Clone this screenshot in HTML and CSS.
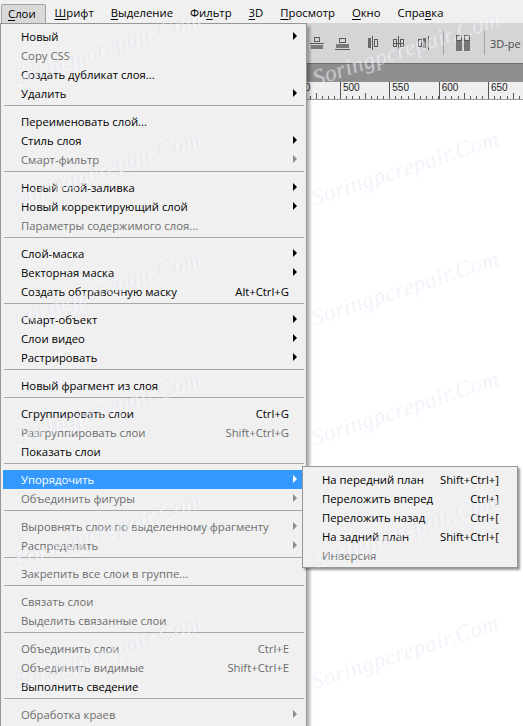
FILE: index.html
```html
<!DOCTYPE html>
<html lang="ru">
<head>
    <meta charset="UTF-8">
    <title>Слои</title>
    <link rel="stylesheet" href="styles.css">
</head>
<body>
<div class="app">
    <!-- main menu bar -->
    <div class="menubar">
        <span class="mb-item active"><u>С</u>лои</span>
        <span class="mb-item"><u>Ш</u>рифт</span>
        <span class="mb-item"><u>В</u>ыделение</span>
        <span class="mb-item">Фи<u>л</u>ьтр</span>
        <span class="mb-item"><u>3</u>D</span>
        <span class="mb-item"><u>П</u>росмотр</span>
        <span class="mb-item"><u>О</u>кно</span>
        <span class="mb-item">Спра<u>в</u>ка</span>
    </div>

    <!-- photoshop workspace behind the menu -->
    <div class="workspace">
        <div class="optionsbar">
            <svg class="ico i1" width="14" height="14" viewBox="0 0 14 14">
                <rect x="4.5" y="1.5" width="5" height="4" fill="none" stroke="#5a5a5a"/>
                <line x1="0" y1="7.5" x2="14" y2="7.5" stroke="#5a5a5a"/>
                <rect x="1" y="9" width="12" height="4" fill="#7a7a7a"/>
            </svg>
            <svg class="ico i2" width="15" height="14" viewBox="0 0 15 14">
                <rect x="4.5" y="2.5" width="6" height="4" fill="none" stroke="#5a5a5a"/>
                <rect x="1" y="8" width="13" height="4" fill="#7a7a7a"/>
                <line x1="0" y1="13.5" x2="15" y2="13.5" stroke="#5a5a5a"/>
            </svg>
            <svg class="ico i3" width="10" height="14" viewBox="0 0 10 14">
                <rect x="0" y="2" width="3" height="10" fill="#6a6a6a"/>
                <line x1="4.5" y1="0" x2="4.5" y2="14" stroke="#5a5a5a"/>
                <rect x="6.5" y="3.5" width="3" height="7" fill="none" stroke="#5a5a5a"/>
            </svg>
            <svg class="ico i4" width="11" height="14" viewBox="0 0 11 14">
                <rect x="0.5" y="3.5" width="3" height="7" fill="none" stroke="#5a5a5a"/>
                <line x1="5.5" y1="0" x2="5.5" y2="14" stroke="#5a5a5a"/>
                <rect x="7.5" y="3.5" width="3" height="7" fill="none" stroke="#5a5a5a"/>
                <line x1="0" y1="7.5" x2="11" y2="7.5" stroke="#5a5a5a"/>
            </svg>
            <svg class="ico i5" width="12" height="14" viewBox="0 0 12 14">
                <rect x="0.5" y="3.5" width="3" height="7" fill="none" stroke="#5a5a5a"/>
                <rect x="5" y="2" width="3" height="10" fill="#6a6a6a"/>
                <line x1="10.5" y1="0" x2="10.5" y2="14" stroke="#5a5a5a"/>
            </svg>
            <span class="vsep"></span>
            <svg class="ico i6" width="16" height="16" viewBox="0 0 16 16">
                <rect x="1.5" y="0.5" width="5" height="5" fill="none" stroke="#5a5a5a"/>
                <rect x="1" y="6" width="6" height="10" fill="#777"/>
                <rect x="9.5" y="0.5" width="5" height="5" fill="none" stroke="#5a5a5a"/>
                <rect x="9" y="6" width="6" height="10" fill="#777"/>
            </svg>
            <span class="vsep"></span>
            <span class="mode3d">3D-ре</span>
        </div>
        <div class="tabbar"></div>
        <div class="ruler">
            <span class="seg">450</span>
            <span class="seg">500</span>
            <span class="seg">550</span>
            <span class="seg">600</span>
            <span class="seg">650</span>
        </div>
        <div class="canvas"></div>
    </div>

    <!-- opened "Слои" menu -->
    <div class="menu">
        <div class="mi sub"><span>Новый</span><i class="arr"></i></div>
        <div class="mi off"><span>Copy CSS</span><i class="arr"></i></div>
        <div class="mi"><span>Создать дубликат слоя...</span><i class="arr"></i></div>
        <div class="mi sub"><span>Удалить</span><i class="arr"></i></div>
        <div class="sep"></div>
        <div class="mi"><span>Переименовать слой...</span><i class="arr"></i></div>
        <div class="mi sub"><span>Стиль слоя</span><i class="arr"></i></div>
        <div class="mi sub off"><span>Смарт-фильтр</span><i class="arr"></i></div>
        <div class="sep"></div>
        <div class="mi sub"><span>Новый слой-заливка</span><i class="arr"></i></div>
        <div class="mi sub"><span>Новый корректирующий слой</span><i class="arr"></i></div>
        <div class="mi off"><span>Параметры содержимого слоя...</span><i class="arr"></i></div>
        <div class="sep"></div>
        <div class="mi sub"><span>Слой-маска</span><i class="arr"></i></div>
        <div class="mi sub"><span>Векторная маска</span><i class="arr"></i></div>
        <div class="mi"><span>Создать обтравочную маску</span><span class="key">Alt+Ctrl+G</span><i class="arr"></i></div>
        <div class="sep"></div>
        <div class="mi sub"><span>Смарт-объект</span><i class="arr"></i></div>
        <div class="mi sub"><span>Слои видео</span><i class="arr"></i></div>
        <div class="mi sub"><span>Растрировать</span><i class="arr"></i></div>
        <div class="sep"></div>
        <div class="mi"><span>Новый фрагмент из слоя</span><i class="arr"></i></div>
        <div class="sep"></div>
        <div class="mi"><span>Сгруппировать слои</span><span class="key">Ctrl+G</span><i class="arr"></i></div>
        <div class="mi off"><span>Разгруппировать слои</span><span class="key">Shift+Ctrl+G</span><i class="arr"></i></div>
        <div class="mi"><span>Показать слои</span><i class="arr"></i></div>
        <div class="sep"></div>
        <div class="mi sub hot"><span>Упорядочить</span><i class="arr"></i></div>
        <div class="mi sub off"><span>Объединить фигуры</span><i class="arr"></i></div>
        <div class="sep"></div>
        <div class="mi sub off"><span>Выровнять слои по выделенному фрагменту</span><i class="arr"></i></div>
        <div class="mi sub off"><span>Распределить</span><i class="arr"></i></div>
        <div class="sep"></div>
        <div class="mi off"><span>Закрепить все слои в группе...</span><i class="arr"></i></div>
        <div class="sep"></div>
        <div class="mi off"><span>Связать слои</span><i class="arr"></i></div>
        <div class="mi off"><span>Выделить связанные слои</span><i class="arr"></i></div>
        <div class="sep"></div>
        <div class="mi off"><span>Объединить слои</span><span class="key">Ctrl+E</span><i class="arr"></i></div>
        <div class="mi off"><span>Объединить видимые</span><span class="key">Shift+Ctrl+E</span><i class="arr"></i></div>
        <div class="mi"><span>Выполнить сведение</span><i class="arr"></i></div>
        <div class="sep"></div>
        <div class="mi sub off"><span>Обработка краев</span><i class="arr"></i></div>
    </div>

    <!-- "Упорядочить" submenu -->
    <div class="submenu">
        <div class="mi"><span>На передний план</span><span class="key">Shift+Ctrl+]</span></div>
        <div class="mi"><span>Переложить вперед</span><span class="key">Ctrl+]</span></div>
        <div class="mi"><span>Переложить назад</span><span class="key">Ctrl+[</span></div>
        <div class="mi"><span>На задний план</span><span class="key">Shift+Ctrl+[</span></div>
        <div class="mi off"><span>Инверсия</span></div>
    </div>

    <!-- site watermark over the screenshot -->
    <div class="watermarks">
        <span class="wm l r1">Soringpcrepair.Com</span>
        <span class="wm l r2">Soringpcrepair.Com</span>
        <span class="wm l r3">Soringpcrepair.Com</span>
        <span class="wm l r4">Soringpcrepair.Com</span>
        <span class="wm l r5">Soringpcrepair.Com</span>
        <span class="wm l r6">Soringpcrepair.Com</span>
        <span class="wm r r1">Soringpcrepair.Com</span>
        <span class="wm r r2">Soringpcrepair.Com</span>
        <span class="wm r r3">Soringpcrepair.Com</span>
        <span class="wm r r4">Soringpcrepair.Com</span>
        <span class="wm r r5">Soringpcrepair.Com</span>
        <span class="wm r r6">Soringpcrepair.Com</span>
    </div>
</div>
</body>
</html>
```

FILE: styles.css
```css
body {
    margin: 0;
    font-family: "Open Sans", "Noto Sans", sans-serif;
    font-size: 11.3px;
    color: #000;
}

.app {
    position: relative;
    width: 523px;
    height: 726px;
    overflow: hidden;
    background: #fff;
    display: flex;
    flex-direction: column;
}

/* menu bar */
.menubar {
    height: 23px;
    flex: none;
    background: #f0f0f0;
    display: flex;
    align-items: flex-end;
    padding-left: 1px;
}

.mb-item {
    height: 19px;
    line-height: 18px;
    padding: 0 8px;
    box-sizing: border-box;
    margin-right: 1px;
    white-space: nowrap;
}

.mb-item u {
    text-decoration-thickness: 1px;
    text-underline-offset: 2px;
}

.mb-item.active {
    background: #d9d9d9;
    border: 1px solid #a2a2a2;
    border-bottom: none;
    border-radius: 2px 2px 0 0;
    padding: 0 9px 0 6px;
}

/* workspace */
.workspace {
    flex: 1;
    display: flex;
    flex-direction: column;
}

.optionsbar {
    height: 40px;
    flex: none;
    background: #d5d5d5;
    display: flex;
    align-items: center;
    padding-left: 310px;
}

.ico {
    flex: none;
    display: block;
}
.i2 { margin-left: 11px; }
.i3 { margin-left: 18px; }
.i4 { margin-left: 15px; }
.i5 { margin-left: 14px; }
.i6 { margin-left: 11px; }

.vsep {
    flex: none;
    width: 1px;
    height: 24px;
    background: #a4a4a4;
    margin-left: 13px;
}

.mode3d {
    margin-left: 5px;
    color: #4a4a4a;
    font-size: 11px;
    white-space: nowrap;
}

.tabbar {
    height: 18px;
    flex: none;
    background: #8e8e8e;
    border-top: 1px solid #6e6e6e;
}

.ruler {
    height: 17px;
    flex: none;
    background: #efefef;
    border-bottom: 1px solid #9c9c9c;
    display: flex;
    padding-left: 290.67px;
    overflow: hidden;
}

.seg {
    flex: none;
    width: 49.33px;
    height: 100%;
    box-sizing: border-box;
    border-left: 1px solid #555;
    padding-left: 2px;
    font-family: "Liberation Sans", sans-serif;
    font-size: 10px;
    line-height: 11px;
    color: #1a1a1a;
    background:
        linear-gradient(#555, #555) 24px 100% / 1px 6px no-repeat,
        repeating-linear-gradient(to right, transparent 0 5.17px, #555 5.17px 6.17px) 0 100% / 100% 3px no-repeat;
}

.canvas {
    flex: 1;
    background: #fff;
}

/* dropdown menus */
.menu {
    position: absolute;
    left: 0;
    top: 23px;
    width: 307px;
    height: 720px;
    box-sizing: border-box;
    border: 1px solid #979797;
    background: #f0f0f0;
    padding: 3px 0;
    box-shadow: 3px 3px 3px rgba(0, 0, 0, 0.3);
}

.mi {
    display: flex;
    align-items: center;
    height: 19px;
    margin: 0 4px 0 2px;
    padding-left: 18px;
    white-space: nowrap;
}

.mi .key {
    margin-left: auto;
}

.arr {
    width: 13px;
    height: 19px;
    flex: none;
    margin-left: auto;
    box-sizing: border-box;
    padding-left: 4px;
    display: flex;
    align-items: center;
}

.mi .key + .arr {
    margin-left: 0;
}

.mi.sub .arr::before {
    content: "";
    border-left: 4px solid #000;
    border-top: 4px solid transparent;
    border-bottom: 4px solid transparent;
    margin-bottom: 2px;
}

.mi.off {
    color: #6d6d6d;
}

.mi.off .arr::before {
    border-left-color: #8c8c8c;
}

.mi.hot {
    background: #3399ff;
    color: #fff;
}

.mi.hot .arr::before {
    border-left-color: #fff;
}

.sep {
    height: 1px;
    background: #a6a6a6;
    margin: 2px 2px 6px 3px;
}

.submenu {
    position: absolute;
    left: 302px;
    top: 466px;
    width: 216px;
    box-sizing: border-box;
    border: 1px solid #979797;
    background: #f0f0f0;
    padding: 3px 0 2px;
    box-shadow: 2px 2px 2px rgba(0, 0, 0, 0.4);
}

.submenu .mi {
    margin: 0 2px;
    padding: 0 16px 0 17px;
}

/* watermark */
.watermarks {
    position: absolute;
    left: 0;
    top: 0;
    right: 0;
    bottom: 0;
    pointer-events: none;
}

.wm {
    position: absolute;
    font-family: "Liberation Serif", serif;
    font-style: italic;
    font-size: 23px;
    line-height: 24px;
    letter-spacing: 0.5px;
    color: rgba(170, 178, 225, 0.16);
    text-shadow: 1px 1px 1px rgba(255, 255, 255, 0.6);
    transform: rotate(-18deg);
    transform-origin: 0 100%;
    white-space: nowrap;
}

.wm.l { left: 18px; }
.wm.r { left: 316px; }
.r1 { top: 66px; }
.r2 { top: 186px; }
.r3 { top: 306px; }
.r4 { top: 426px; }
.r5 { top: 548px; }
.r6 { top: 670px; }
```
